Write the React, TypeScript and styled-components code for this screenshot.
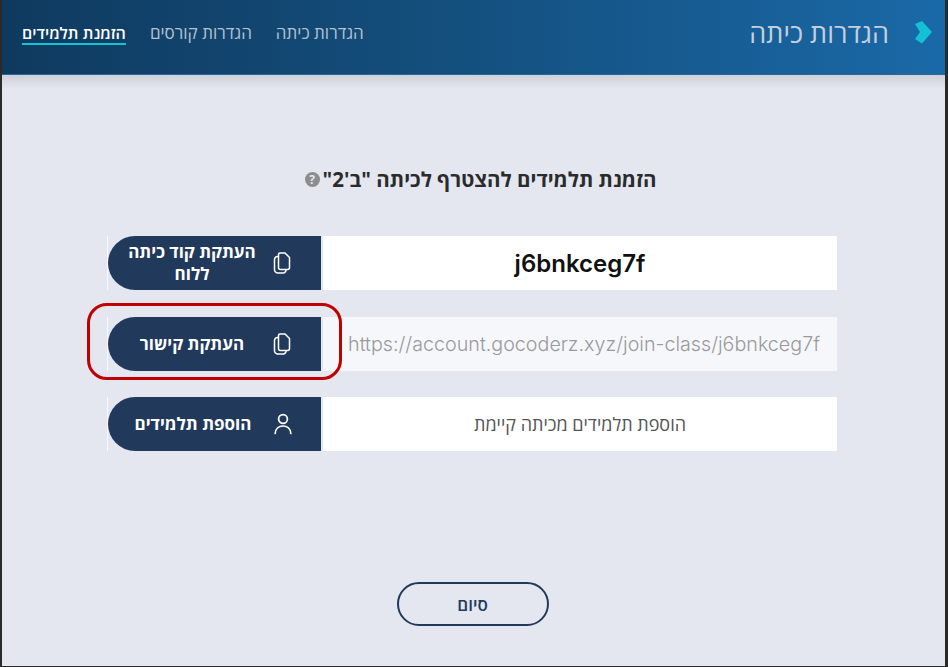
import React from "react";
import styled, { createGlobalStyle } from "styled-components";

const Global = createGlobalStyle`
  html, body { margin: 0; padding: 0; background: #2a2a2a; }
  body { font-family: "Open Sans", "Liberation Sans", sans-serif; }
  * { box-sizing: border-box; }
`;

const Frame = styled.div`
  width: 948px;
  height: 667px;
  padding: 0 3px 1px 2px;
  background: #2a2a2a;
  overflow: hidden;
`;

const Window = styled.div`
  position: relative;
  height: 100%;
  display: flex;
  flex-direction: column;
  background: #e4e7f0;
`;

const Header = styled.header`
  height: 75px;
  flex: none;
  display: flex;
  direction: rtl;
  align-items: center;
  justify-content: space-between;
  padding: 0 13px 0 20px;
  background: linear-gradient(90deg, #0f3a5f 0%, #14507f 50%, #1a69a8 100%);
  border-bottom: 1px solid #1f6aa5;
`;

const TitleGroup = styled.div`
  display: flex;
  align-items: center;
  gap: 26px;
  margin-bottom: 9px;
`;

const Title = styled.h1`
  margin: 0;
  font-size: 27px;
  line-height: 32px;
  font-weight: 400;
  color: #c3cfdc;
`;

const Nav = styled.nav`
  display: flex;
  align-items: center;
  gap: 24px;
  margin-bottom: 6px;
`;

const NavItem = styled.span<{ $active?: boolean }>`
  font-size: ${(p) => (p.$active ? "16px" : "17px")};
  line-height: 20px;
  font-weight: ${(p) => (p.$active ? 600 : 400)};
  color: ${(p) => (p.$active ? "#ffffff" : "#b4c2d1")};
  border-bottom: 2px solid ${(p) => (p.$active ? "#14c3d6" : "transparent")};
`;

const Body = styled.main`
  flex: 1;
  display: flex;
  flex-direction: column;
  align-items: center;
  direction: rtl;
  background: linear-gradient(180deg, #cfd1d6 0, #e4e7f0 14px);
`;

const Heading = styled.h2`
  display: flex;
  align-items: center;
  gap: 3px;
  margin: 92px 0 0 14px;
  height: 24px;
  font-size: 20.5px;
  font-weight: 700;
  color: #2b2b2b;
`;

const Help = styled.span`
  width: 15px;
  height: 15px;
  border-radius: 50%;
  background: #8d8d8d;
  color: #e4e7f0;
  display: flex;
  align-items: center;
  justify-content: center;
  font-size: 12px;
  font-weight: 700;
`;

const Rows = styled.div`
  margin: 45px 3px 0 0;
  display: flex;
  flex-direction: column;
  gap: 26.5px;
  width: 730px;
  direction: ltr;
`;

const Row = styled.div`
  display: flex;
  height: 54px;
  align-items: stretch;
  gap: 2px;
  border-left: 1px solid #f8f9fb;
`;

const Field = styled.div<{ $tone: "code" | "link" | "plain" }>`
  flex: 1;
  display: flex;
  align-items: center;
  justify-content: center;
  padding-left: ${(p) => (p.$tone === "link" ? "8px" : "0")};
  direction: ${(p) => (p.$tone === "plain" ? "rtl" : "ltr")};
  background: ${(p) => (p.$tone === "link" ? "#f6f7fa" : "#ffffff")};
  color: ${(p) => (p.$tone === "code" ? "#111111" : p.$tone === "link" ? "#9a9a9a" : "#555555")};
  font-family: ${(p) => (p.$tone === "plain" ? '"Open Sans", "Liberation Sans", sans-serif' : 'Inter, "Liberation Sans", sans-serif')};
  font-size: ${(p) => (p.$tone === "code" ? "24px" : p.$tone === "link" ? "19.7px" : "18px")};
  font-weight: ${(p) => (p.$tone === "code" ? 600 : p.$tone === "link" ? 300 : 400)};
`;

const ActionButton = styled.button`
  width: 213px;
  flex: none;
  display: flex;
  align-items: center;
  direction: rtl;
  padding: 0 29px 0 4px;
  border: 0;
  border-top-left-radius: 27px;
  border-bottom-left-radius: 27px;
  background: #213a5c;
  color: #ffffff;
  font-family: inherit;
`;

const ButtonLabel = styled.span`
  flex: 1;
  font-size: 17px;
  line-height: 22px;
  font-weight: 700;
  text-align: center;
`;

const Footer = styled.div`
  margin: 131px 2px 0 0;
`;

const Finish = styled.button`
  width: 152px;
  height: 44px;
  border-radius: 22px;
  border: 2px solid #213a5c;
  background: transparent;
  color: #213a5c;
  font-family: inherit;
  font-size: 17px;
  font-weight: 600;
`;

const Callout = styled.div`
  position: absolute;
  left: 85px;
  top: 303px;
  width: 255px;
  height: 77px;
  border: 3.5px solid #c00000;
  border-radius: 20px;
  pointer-events: none;
`;

const Chevron = () => (
  <svg width="17" height="23" viewBox="0 0 17 23" aria-hidden="true">
    <path d="M0 3 L7 0 L17 11 L7 22.5 L0 18 L5 11 Z" fill="#12c2d4" />
  </svg>
);

const CopyIcon = () => (
  <svg width="20" height="22" viewBox="0 0 20 22" fill="none" stroke="#fff" strokeWidth="1.5" aria-hidden="true">
    <path d="M6.5 2.5 a1.5 1.5 0 0 1 1.5 -1.5 h5 l4.5 4.5 v10 a2 2 0 0 1 -2 2 h-7 a2 2 0 0 1 -2 -2 Z" />
    <path d="M6.5 4.5 h-1 a3 3 0 0 0 -3 3 v10 a3.5 3.5 0 0 0 3.5 3.5 h5.5 a3 3 0 0 0 2.5 -3.5" />
  </svg>
);

const UserIcon = () => (
  <svg width="18" height="22" viewBox="0 0 18 22" fill="none" stroke="#fff" strokeWidth="1.7" strokeLinecap="round" aria-hidden="true">
    <circle cx="9" cy="6" r="4.4" />
    <path d="M1.2 20.5 C1.5 15.5 5 13 9 13 S16.5 15.5 16.8 20.5" />
  </svg>
);

export default function App() {
  return (
    <Frame>
      <Global />
      <Window>
        <Header>
          <TitleGroup>
            <Chevron />
            <Title>הגדרות כיתה</Title>
          </TitleGroup>
          <Nav>
            <NavItem>הגדרות כיתה</NavItem>
            <NavItem>הגדרות קורסים</NavItem>
            <NavItem $active>הזמנת תלמידים</NavItem>
          </Nav>
        </Header>
        <Body>
          <Heading>
            <span>הזמנת תלמידים להצטרף לכיתה "ב'2"</span>
            <Help>?</Help>
          </Heading>
          <Rows>
            <Row>
              <ActionButton>
                <CopyIcon />
                <ButtonLabel>העתקת קוד כיתה ללוח</ButtonLabel>
              </ActionButton>
              <Field $tone="code">j6bnkceg7f</Field>
            </Row>
            <Row>
              <ActionButton>
                <CopyIcon />
                <ButtonLabel>העתקת קישור</ButtonLabel>
              </ActionButton>
              <Field $tone="link">https://account.gocoderz.xyz/join-class/j6bnkceg7f</Field>
            </Row>
            <Row>
              <ActionButton>
                <UserIcon />
                <ButtonLabel>הוספת תלמידים</ButtonLabel>
              </ActionButton>
              <Field $tone="plain">הוספת תלמידים מכיתה קיימת</Field>
            </Row>
          </Rows>
          <Footer>
            <Finish>סיום</Finish>
          </Footer>
        </Body>
        <Callout />
      </Window>
    </Frame>
  );
}
